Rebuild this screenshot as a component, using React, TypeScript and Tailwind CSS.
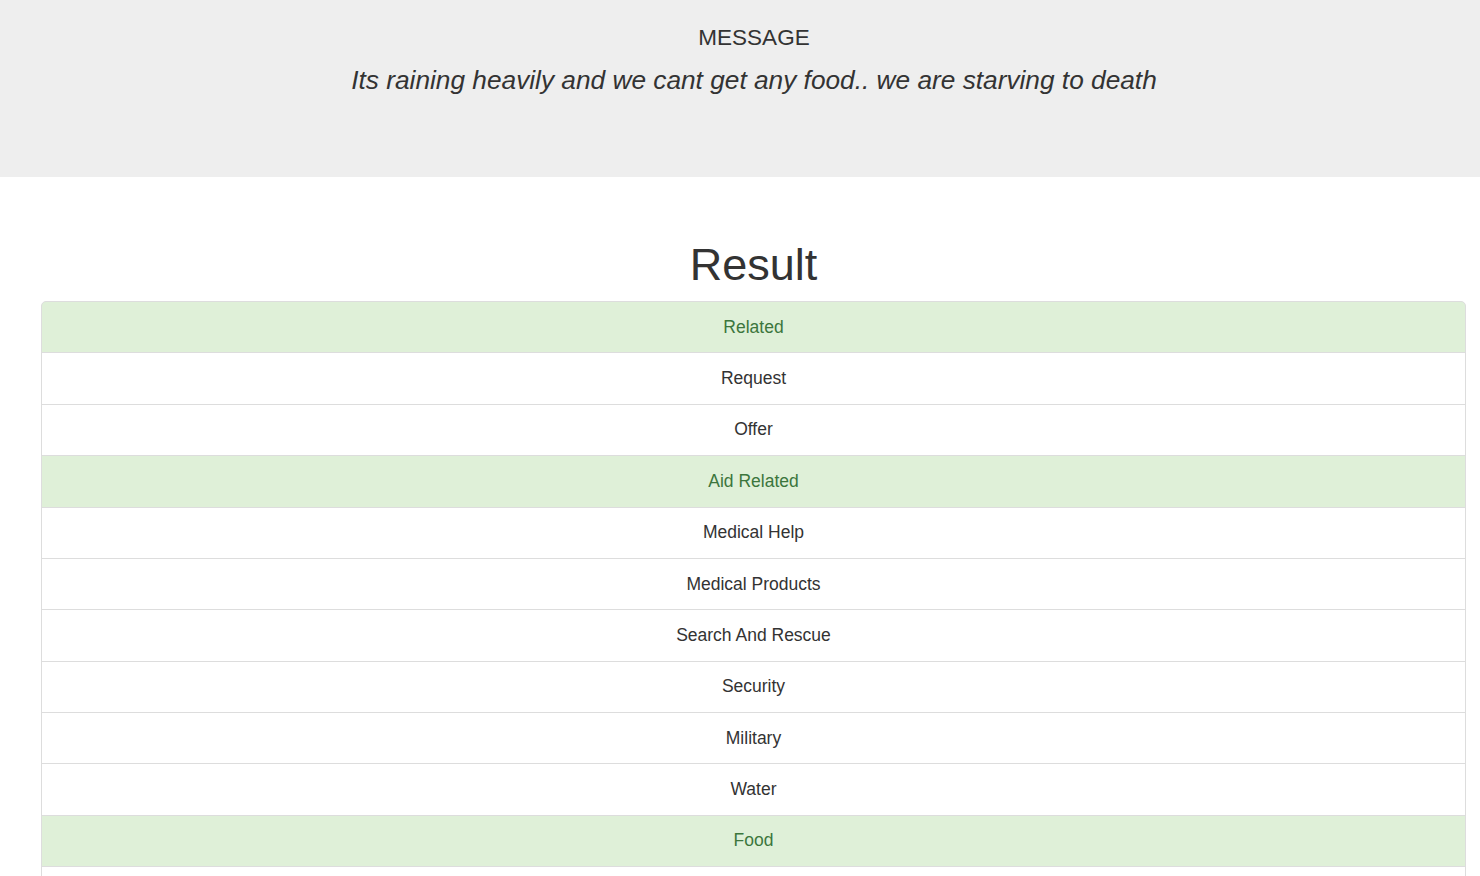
const CATEGORIES: { name: string; hit: boolean }[] = [
  { name: "Related", hit: true },
  { name: "Request", hit: false },
  { name: "Offer", hit: false },
  { name: "Aid Related", hit: true },
  { name: "Medical Help", hit: false },
  { name: "Medical Products", hit: false },
  { name: "Search And Rescue", hit: false },
  { name: "Security", hit: false },
  { name: "Military", hit: false },
  { name: "Water", hit: false },
  { name: "Food", hit: true },
  { name: "Shelter", hit: false },
  { name: "Clothing", hit: false },
]

export default function App() {
  return (
    <div className="min-h-screen bg-white text-[#333] font-['Liberation_Sans',Arial,sans-serif]">
      {/* MESSAGE BANNER */}
      <section className="h-[177px] bg-[#eeeeee] pt-[26px] pl-[28px] text-center">
        <p className="text-[22.5px] leading-[24.75px]">MESSAGE</p>
        <p className="mt-[11px] text-[26.25px] leading-[37.5px] italic">
          Its raining heavily and we cant get any food.. we are starving to death
        </p>
      </section>

      {/* RESULT */}
      <section className="ml-[41px] mr-[14px]">
        <h1 className="mt-[63px] mb-[11.5px] text-center text-[45px] leading-[49.5px] font-medium">Result</h1>
        <ul>
          {CATEGORIES.map((cat, i) => (
            <li
              key={cat.name}
              className={
                "-mb-px border border-[#dddddd] py-[12.7px] text-center text-[17.5px] leading-[25px] " +
                (i === 0 ? "rounded-t-[5px] " : "") +
                (cat.hit ? "bg-[#dff0d8] text-[#3c763d]" : "bg-white text-[#333]")
              }
            >
              {cat.name}
            </li>
          ))}
        </ul>
      </section>
    </div>
  )
}
